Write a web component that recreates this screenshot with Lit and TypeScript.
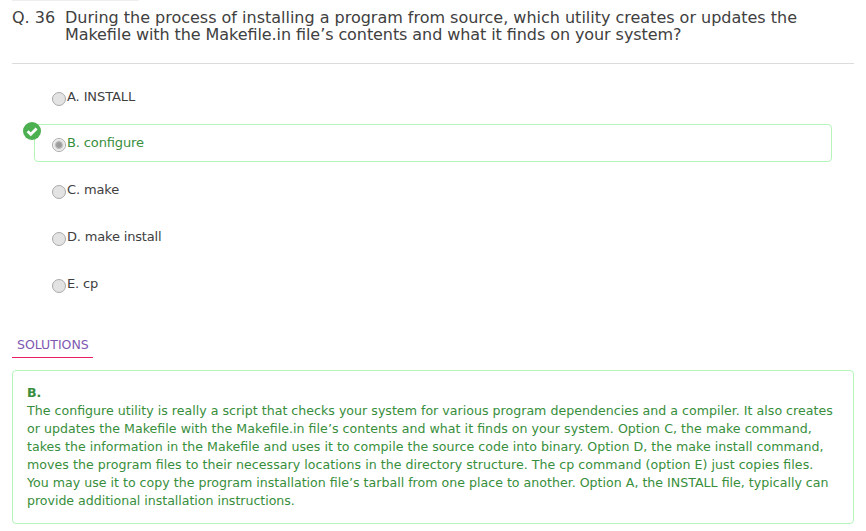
import { LitElement, html, css, svg } from "lit";
import { customElement, property } from "lit/decorators.js";
import { classMap } from "lit/directives/class-map.js";
import { styleMap } from "lit/directives/style-map.js";

interface Line {
  text: string;
  /** letter spacing in px */
  track: number;
}

const QUESTION: Line[] = [
  { text: "During the process of installing a program from source, which utility creates or updates the", track: -0.01 },
  { text: "Makefile with the Makefile.in file’s contents and what it finds on your system?", track: -0.08 },
];

const OPTIONS: Line[] = [
  { text: "A. INSTALL", track: -0.1 },
  { text: "B. configure", track: -0.12 },
  { text: "C. make", track: -0.15 },
  { text: "D. make install", track: -0.17 },
  { text: "E. cp", track: -0.15 },
];
const CORRECT = 1;

const SOLUTION: Line[] = [
  { text: "The configure utility is really a script that checks your system for various program dependencies and a compiler. It also creates", track: 0.015 },
  { text: "or updates the Makefile with the Makefile.in file’s contents and what it finds on your system. Option C, the make command,", track: 0.035 },
  { text: "takes the information in the Makefile and uses it to compile the source code into binary. Option D, the make install command,", track: 0.025 },
  { text: "moves the program files to their necessary locations in the directory structure. The cp command (option E) just copies files.", track: 0.035 },
  { text: "You may use it to copy the program installation file’s tarball from one place to another. Option A, the INSTALL file, typically can", track: 0.005 },
  { text: "provide additional installation instructions.", track: -0.03 },
];

const tracking = (line: Line) => styleMap({ letterSpacing: `${line.track}px` });

@customElement("quiz-option")
export class QuizOption extends LitElement {
  @property({ attribute: false }) line: Line = { text: "", track: 0 };
  @property({ type: Boolean }) correct = false;

  static styles = css`
    :host { display: block; }
    .option {
      position: relative;
      box-sizing: border-box;
      height: 38px;
      display: flex;
      align-items: flex-start;
      padding: 9px 0 0 17px;
      border: 1px solid transparent;
      border-radius: 4px;
      color: #404040;
      font-size: 13px;
      line-height: 18px;
      white-space: nowrap;
    }
    :host(.first) .option { padding-top: 10px; }
    .correct { border-color: #b5f5ba; color: #388e3c; }
    .radio { width: 14px; height: 14px; margin-top: 4px; margin-right: 1px; flex: none; }
    .badge { position: absolute; left: -12px; top: -3px; width: 18px; height: 18px; }
  `;

  render() {
    return html`
      <div class=${classMap({ option: true, correct: this.correct })}>
        <svg class="radio" viewBox="0 0 14 14">
          <circle cx="7" cy="7" r="6.5" fill="#e3e3e3" stroke="#a9a9a9" />
          ${this.correct
            ? svg`<circle cx="7" cy="7" r="5.5" fill="none" stroke="#f0f0f0" />
                  <circle cx="7" cy="7" r="3.4" fill="#9b9b9b" stroke="#bcbcbc" />`
            : null}
        </svg>
        <span style=${tracking(this.line)}>${this.line.text}</span>
        ${this.correct
          ? html`<svg class="badge" viewBox="0 0 18 18">
              <circle cx="9" cy="9" r="9" fill="#4caf50" />
              <path d="M4.6 9.2 L7.8 12.3 L13.6 6.5" fill="none" stroke="#fff" stroke-width="2.8" />
            </svg>`
          : null}
      </div>
    `;
  }
}

@customElement("app-root")
export class AppRoot extends LitElement {
  static styles = css`
    :host {
      display: block;
      box-sizing: border-box;
      height: 531px;
      padding: 0 12px;
      overflow: hidden;
      background: #fff;
      color: #404040;
      font-family: "DejaVu Sans", sans-serif;
      font-feature-settings: "liga" 1;
    }
    .strip { width: 127px; height: 1px; background: #eee; border-radius: 0 0 2px 2px; }
    .question {
      box-sizing: border-box;
      height: 63px;
      display: flex;
      padding-top: 8px;
      border-bottom: 1px solid #dcdcdc;
      font-size: 16px;
      line-height: 17px;
      white-space: nowrap;
    }
    .number { width: 53px; flex: none; }
    .options {
      display: flex;
      flex-direction: column;
      gap: 9px;
      padding: 13px 22px 0;
    }
    .tab {
      box-sizing: border-box;
      width: 81px;
      height: 27px;
      margin-top: 28px;
      padding-left: 5px;
      border-bottom: 1px solid #e91e63;
      color: #7e57b2;
      font-size: 12.5px;
      line-height: 28px;
    }
    .solution {
      box-sizing: border-box;
      height: 154px;
      margin-top: 12px;
      padding: 13px 14px;
      border: 1px solid #b5f5ba;
      border-radius: 4px;
      color: #388e3c;
      font-size: 12.6px;
      line-height: 18px;
      white-space: nowrap;
    }
    .answer { font-weight: bold; }
  `;

  render() {
    return html`
      <div class="strip"></div>
      <div class="question">
        <div class="number">Q. 36</div>
        <div>${QUESTION.map((l) => html`<div style=${tracking(l)}>${l.text}</div>`)}</div>
      </div>
      <div class="options">
        ${OPTIONS.map(
          (o, i) => html`<quiz-option class=${classMap({ first: i === 0 })} .line=${o} .correct=${i === CORRECT}></quiz-option>`
        )}
      </div>
      <div class="tab">SOLUTIONS</div>
      <div class="solution">
        <div class="answer">B.</div>
        ${SOLUTION.map((l) => html`<div style=${tracking(l)}>${l.text}</div>`)}
      </div>
    `;
  }
}
